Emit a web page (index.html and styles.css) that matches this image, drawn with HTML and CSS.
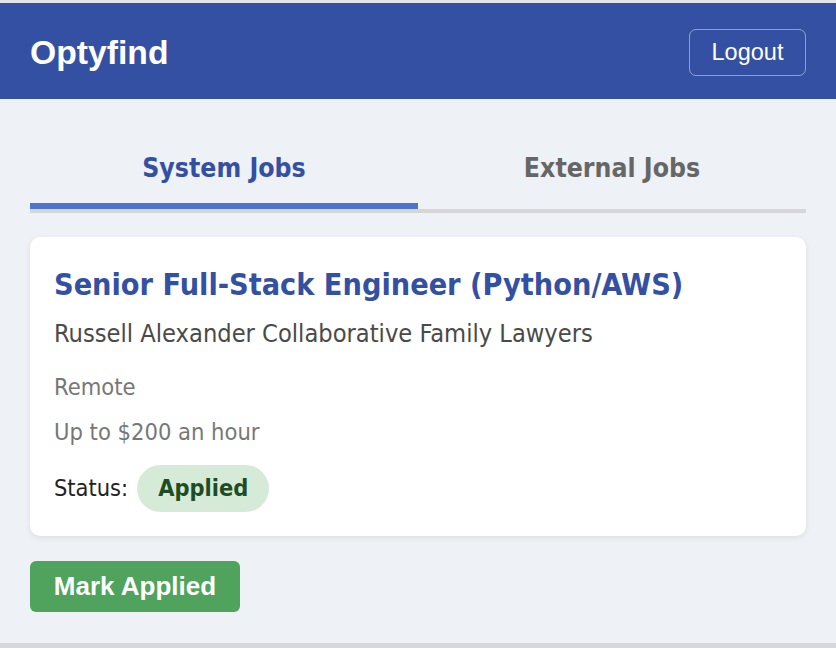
FILE: index.html
```html
<!DOCTYPE html>
<html lang="en">
<head>
<meta charset="utf-8">
<title>Optyfind</title>
<link rel="stylesheet" href="styles.css">
</head>
<body>
<div class="topstrip"></div>
<header class="header">
  <div class="brand">Optyfind</div>
  <button class="logout">Logout</button>
</header>
<main class="main">
  <nav class="tabs">
    <button class="tab active">System Jobs</button>
    <button class="tab">External Jobs</button>
  </nav>
  <section class="card">
    <h2 class="title">Senior Full-Stack Engineer (Python/AWS)</h2>
    <div class="company">Russell Alexander Collaborative Family Lawyers</div>
    <div class="meta">Remote</div>
    <div class="meta">Up to $200 an hour</div>
    <div class="status">
      <span class="status-label">Status:</span>
      <span class="badge">Applied</span>
    </div>
  </section>
  <button class="mark">Mark Applied</button>
</main>
<div class="bottomstrip"></div>
</body>
</html>
```
FILE: styles.css
```css
html, body {
  margin: 0;
  padding: 0;
}
body {
  background: #eef1f6;
  font-family: "DejaVu Sans Condensed", "DejaVu Sans", sans-serif;
  height: 648px;
  display: flex;
  flex-direction: column;
  overflow: hidden;
}
.topstrip {
  height: 3px;
  background: #e4e5ea;
  flex: none;
}
.header {
  flex: none;
  height: 96px;
  background: #3450a3;
  display: flex;
  align-items: center;
  justify-content: space-between;
  padding: 0 30px;
}
.brand {
  font-family: "Liberation Sans", Arial, sans-serif;
  font-weight: bold;
  font-size: 33.7px;
  color: #fff;
  margin-top: 3px;
}
.logout {
  font-family: "Liberation Sans", Arial, sans-serif;
  font-size: 23.5px;
  color: #fff;
  background: transparent;
  border: 1.5px solid rgba(255,255,255,0.45);
  border-radius: 7px;
  width: 117px;
  height: 47px;
  padding: 0;
  margin-top: 3px;
}
.main {
  flex: 1;
  padding: 37px 30px 0;
  display: flex;
  flex-direction: column;
  align-items: flex-start;
}
.tabs {
  align-self: stretch;
  display: flex;
  border-bottom: 4px solid #d6d6d6;
}
.tab {
  flex: 1;
  background: transparent;
  border: none;
  border-bottom: 6px solid transparent;
  padding: 15px 0 18px;
  font-family: "DejaVu Sans Condensed", "DejaVu Sans", sans-serif;
  font-weight: bold;
  font-size: 26.4px;
  line-height: 34px;
  color: #666;
}
.tab.active {
  color: #3450a3;
  border-bottom-color: #4f74d0;
}
.card {
  align-self: stretch;
  margin-top: 24px;
  background: #fff;
  border-radius: 10px;
  box-shadow: 0 2px 6px rgba(0,0,0,0.08);
  padding: 30px 24px 24px;
}
.title {
  margin: 0;
  font-size: 30.3px;
  line-height: 36px;
  font-weight: bold;
  color: #3450a3;
}
.company {
  margin-top: 16px;
  font-size: 25.2px;
  line-height: 30px;
  color: #4a4a4a;
}
.meta {
  margin-top: 24px;
  font-size: 23.5px;
  line-height: 29px;
  color: #777;
}
.meta + .meta {
  margin-top: 16px;
}
.status {
  margin-top: 18px;
  display: flex;
  align-items: center;
  gap: 9px;
  font-size: 23.4px;
  line-height: 29px;
  color: #222;
}
.badge {
  background: #d5ebd8;
  color: #1e4d24;
  font-weight: bold;
  border-radius: 24px;
  padding: 0 21px;
  height: 47px;
  line-height: 47px;
}
.mark {
  margin-top: 25px;
  font-family: "Liberation Sans", Arial, sans-serif;
  font-weight: bold;
  font-size: 26px;
  color: #fff;
  background: #4fa35c;
  border: none;
  border-radius: 6px;
  width: 210px;
  height: 51px;
  padding: 0;
}
.bottomstrip {
  flex: none;
  height: 5px;
  background: #d6d6db;
}
```
